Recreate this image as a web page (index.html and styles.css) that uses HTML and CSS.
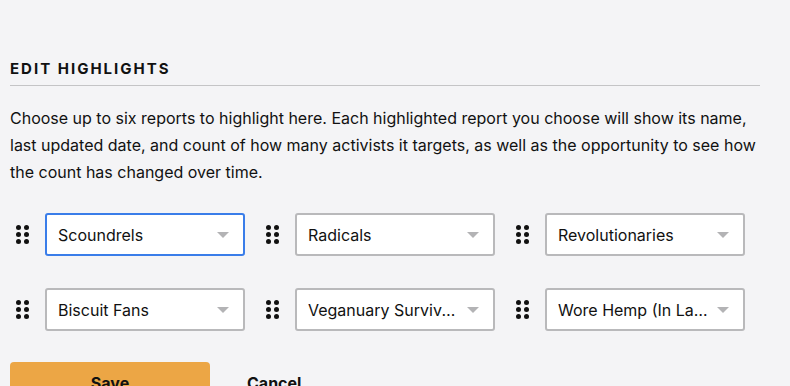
FILE: index.html
```html
<html>
    <head>
        <link rel="stylesheet" href="styles.css">
    </head>
    <body>
        <div class="page">
            <h2 class="title">EDIT HIGHLIGHTS</h2>
            <p class="intro">Choose up to six reports to highlight here. Each highlighted report you choose will show its name, last updated date, and count of how many activists it targets, as well as the opportunity to see how the count has changed over time.</p>

            <div class="slots">
                <div class="slot">
                    <span class="handle"><i></i><i></i><i></i><i></i><i></i><i></i></span>
                    <div class="select focused"><span>Scoundrels</span><b class="caret"></b></div>
                </div>
                <div class="slot">
                    <span class="handle"><i></i><i></i><i></i><i></i><i></i><i></i></span>
                    <div class="select"><span>Radicals</span><b class="caret"></b></div>
                </div>
                <div class="slot">
                    <span class="handle"><i></i><i></i><i></i><i></i><i></i><i></i></span>
                    <div class="select"><span>Revolutionaries</span><b class="caret"></b></div>
                </div>
                <div class="slot">
                    <span class="handle"><i></i><i></i><i></i><i></i><i></i><i></i></span>
                    <div class="select"><span>Biscuit Fans</span><b class="caret"></b></div>
                </div>
                <div class="slot">
                    <span class="handle"><i></i><i></i><i></i><i></i><i></i><i></i></span>
                    <div class="select"><span>Veganuary Survivors</span><b class="caret"></b></div>
                </div>
                <div class="slot">
                    <span class="handle"><i></i><i></i><i></i><i></i><i></i><i></i></span>
                    <div class="select"><span>Wore Hemp (In Law School)</span><b class="caret"></b></div>
                </div>
            </div>

            <div class="actions">
                <button class="save">Save</button>
                <button class="cancel">Cancel</button>
            </div>
        </div>
    </body>
</html>
```

FILE: styles.css
```css
body{
    margin: 0;
    background-color: #f4f4f6;
    font-family: Inter, "Noto Sans", sans-serif;
    color: #111;
}
.page{
    width: 750px;
    padding: 59px 0 0 10px;
}
.title{
    margin: 0;
    padding-bottom: 6px;
    font-size: 15px;
    line-height: 20px;
    font-weight: 700;
    letter-spacing: 2px;
    border-bottom: 1px solid #c4c4c6;
}
.intro{
    margin: 19px 0 0 0;
    font-size: 16px;
    line-height: 27px;
}
.slots{
    display: grid;
    grid-template-columns: repeat(3, 250px);
    row-gap: 32px;
    margin-top: 27px;
}
.slot{
    display: flex;
    align-items: center;
}
.handle{
    display: grid;
    grid-template-columns: 5px 5px;
    column-gap: 3px;
    row-gap: 2px;
    margin-left: 6px;
    margin-right: 16px;
}
.handle i{
    width: 5px;
    height: 5px;
    border-radius: 50%;
    background-color: #111;
}
.select{
    box-sizing: border-box;
    width: 200px;
    height: 43px;
    display: flex;
    align-items: center;
    padding: 0 14px 0 11px;
    background-color: #fff;
    border: 2px solid #b9b9bb;
    border-radius: 3px;
    font-size: 16px;
}
.select span{
    flex: 1;
    overflow: hidden;
    white-space: nowrap;
    text-overflow: ellipsis;
    margin-right: 6px;
}
.select.focused{
    border-color: #3a7de9;
}
.caret{
    width: 0;
    height: 0;
    border-left: 6px solid transparent;
    border-right: 6px solid transparent;
    border-top: 6px solid #b3b3b5;
}
.actions{
    display: flex;
    align-items: center;
    margin-top: 31px;
}
button{
    font-family: Inter, "Noto Sans", sans-serif;
    font-size: 16px;
    font-weight: 700;
    border: none;
    outline: none;
    color: #111;
}
.save{
    width: 200px;
    height: 42px;
    background-color: #eca645;
    border-radius: 4px;
}
.cancel{
    background-color: transparent;
    margin-left: 27px;
    padding: 0 10px;
}
```
